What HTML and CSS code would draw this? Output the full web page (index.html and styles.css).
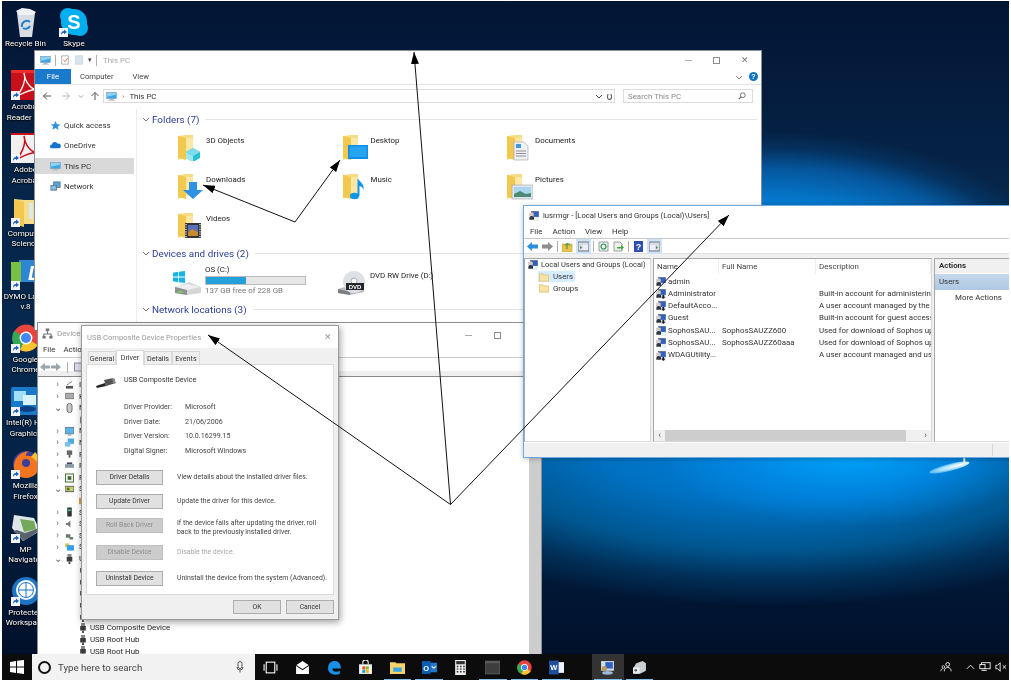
FILE: index.html
```html
<!DOCTYPE html>
<html lang="en">
<head>
<meta charset="utf-8">
<title>Windows desktop</title>
<link rel="stylesheet" href="styles.css">
</head>
<body>
<svg class="defs" width="0" height="0" aria-hidden="true">
  <defs>
    <symbol id="pc" viewBox="0 0 16 14"><rect x="1" y="1" width="14" height="9" fill="#39a6e8" stroke="#7f98ac" stroke-width=".8"/><path d="M1.500 1.500h13v3l-13 3z" fill="#8fd0f5"/><rect x="5" y="10.500" width="6" height="1.500" fill="#a8b4bc"/><rect x="3" y="12" width="10" height="1.400" fill="#c5ccd2"/></symbol>
    <symbol id="folder" viewBox="0 0 28 28"><path d="M2 3l8-1h7v22l-7 0-8 3z" fill="#f7dc86"/><path d="M2 3l8 2v22l-8-2z" fill="#f3c84f"/><path d="M10 5h7v19h-7z" fill="#fbe7a6"/></symbol>
    <symbol id="f3d" viewBox="0 0 28 28"><use href="#folder"/><path d="M10 19l7-4 7 4v6l-7 4-7-4z" fill="#27bfd6"/><path d="M10 19l7 4v6l-7-4z" fill="#9fe7ef"/><path d="M10 19l7-4 7 4-7 4z" fill="#7fdceb"/></symbol>
    <symbol id="fdesk" viewBox="0 0 28 28"><use href="#folder"/><rect x="7" y="12" width="20" height="14" fill="#0f8fe8"/><rect x="8.500" y="13.500" width="17" height="10.500" fill="#27a4f0"/></symbol>
    <symbol id="fdoc" viewBox="0 0 28 28"><use href="#folder"/><path d="M9 9h10l4 4v14H9z" fill="#eef0f2" stroke="#9aa3ab" stroke-width=".6"/><rect x="11" y="11" width="5" height="4" fill="#3b9ae0"/><path d="M11 18h10M11 20.500h10M11 23h10" stroke="#778" stroke-width=".8"/></symbol>
    <symbol id="fdown" viewBox="0 0 28 28"><use href="#folder"/><path d="M14 14h8v8h6l-10 9-10-9h6z" fill="#2d92e3" transform="translate(-1 -4)"/></symbol>
    <symbol id="fmusic" viewBox="0 0 28 28"><use href="#folder"/><ellipse cx="13.500" cy="24" rx="4.500" ry="3.200" fill="#1295e6"/><path d="M16.500 24V6c2 4 7 5 6 12-1-3-3-4-4-4v10z" fill="#1295e6"/></symbol>
    <symbol id="fpic" viewBox="0 0 28 28"><use href="#folder"/><rect x="7" y="13" width="21" height="14" fill="#dfe5ea" stroke="#9aa3ab" stroke-width=".6"/><rect x="9" y="15" width="17" height="10" fill="#a9d6ef"/><path d="M9 22l6-3 6 3 5-1v4H9z" fill="#4e8a73"/></symbol>
    <symbol id="fvid" viewBox="0 0 28 28"><use href="#folder"/><rect x="9" y="12" width="16" height="15" fill="#33343a"/><rect x="12" y="14" width="10" height="11" fill="#5a70b8"/><path d="M12 21l4-3 6 3v4H12z" fill="#c8892f"/><path d="M10 13v14M24 13v14" stroke="#ddd" stroke-width="1.400" stroke-dasharray="1.200 1.200"/></symbol>
    <symbol id="hdd" viewBox="0 0 28 24"><path d="M2 16l14-5 12 5v6l-14 2-12-2z" fill="#d4d6d8"/><path d="M2 16l12 3 14-3-14-3z" fill="#eceef0"/><path d="M2 16l12 3v5l-12-2z" fill="#8d9094"/><rect x="5" y="20" width="5" height="1.600" fill="#7ad84a"/></symbol>
    <symbol id="dvd" viewBox="0 0 28 24"><path d="M1 18l13-4 13 4v3l-14 3-12-2z" fill="#b9bcc0"/><path d="M1 18l12 3v3l-12-2z" fill="#7a7d82"/><circle cx="17" cy="11" r="11" fill="#dde0e4"/><circle cx="17" cy="10" r="3" fill="#fff" stroke="#a9adb2"/><rect x="9" y="12" width="18" height="7" fill="#23242a"/></symbol>
    <symbol id="win" viewBox="0 0 14 14"><path d="M0 2l6-1v5.500H0zM7 .8l7-.8v6.500H7zM0 7.500h6V13l-6-1zM7 7.500h7V14l-7-1z"/></symbol>
    <symbol id="user" viewBox="0 0 11 11"><rect x="3" y="0.500" width="7.500" height="6.500" fill="#2f62c0" stroke="#39405a" stroke-width=".5"/><rect x="0" y="2" width="5" height="6" fill="#cbd5e8"/><circle cx="3" cy="3.500" r="1.900" fill="#e5c9a8"/><path d="M.3 9.500c0-3 1-4 2.700-4s3 1 3 4z" fill="#2e3440"/><rect x="5.500" y="6.500" width="5.500" height="4.500" fill="#e9eef6"/></symbol>
    <symbol id="userd" viewBox="0 0 11 11"><use href="#user"/><path d="M7 6.500h2v2h1.400L8 10.900 5.600 8.500H7z" fill="#222"/></symbol>
    <symbol id="short" viewBox="0 0 9 9"><rect width="9" height="9" fill="#f2f4f8"/><path d="M2 7c0-3 1-4 3-4V1.500L8 4 5 6.300V4.800C3.500 4.800 3 5.500 2 7z" fill="#1c5fc0"/></symbol>
    <symbol id="chromei" viewBox="0 0 24 24"><circle cx="12" cy="12" r="11.500" fill="#e8453c"/><path d="M12 12L22 18A11.500 11.500 0 0 1 6.500 22z" fill="#f8c42c"/><path d="M12 12L6.500 22.500A11.500 11.500 0 0 1 2 6z" fill="#35a853"/><circle cx="12" cy="12" r="5.500" fill="#fff"/><circle cx="12" cy="12" r="4.300" fill="#4387f3"/></symbol>
    <symbol id="usb" viewBox="0 0 8 10"><rect x="2" y="0" width="4" height="3" fill="#888"/><rect x="1.200" y="3" width="5.600" height="4.500" fill="#3a3a3a"/><rect x="3" y="7.500" width="2" height="2.500" fill="#555"/></symbol>
    <symbol id="fsmall" viewBox="0 0 12 11"><path d="M.5 1.500h4l1 1.500h6v7.500H.5z" fill="#f8e3a0" stroke="#c8a850" stroke-width=".6"/></symbol>
  </defs>
</svg>

<div class="desktop">
  <main class="screen">
    <ul class="dicons">
      <li class="dicon"><svg class="dimg" viewBox="0 0 30 30"><path d="M6 6h18l-3 24H9z" fill="#d7dde2"/><path d="M5 4l6-3 8 1 6 3-3 3H8z" fill="#eff2f4"/><path d="M11 20a5 5 0 0 1 8-5M19 19a5 5 0 0 1-7 2" fill="none" stroke="#2481cf" stroke-width="2"/></svg><span class="dlabel">Recycle Bin</span></li>
      <li class="dicon"><svg class="dimg" viewBox="0 0 30 30"><circle cx="9" cy="9" r="8" fill="#00aff0"/><circle cx="21" cy="21" r="8" fill="#00aff0"/><circle cx="15" cy="15" r="13" fill="#00aff0"/><text x="15" y="22" class="skype-s">S</text><use href="#short" x="0" y="21" width="9" height="9"/></svg><span class="dlabel">Skype</span></li>
      <li class="dicon"><svg class="dimg" viewBox="0 0 30 30"><rect width="30" height="30" fill="#c8101a"/><rect width="30" height="3" fill="#ee2a2a"/><path d="M13 3c3 8-4 21-9 24 4-1 14-9 23-7-6 0-13-7-14-17z" fill="none" stroke="#fff" stroke-width="1.300"/><use href="#short" x="0" y="21" width="9" height="9"/></svg><span class="dlabel">Acrobat<br>Reader DC</span></li>
      <li class="dicon"><svg class="dimg" viewBox="0 0 30 30"><rect width="30" height="30" fill="#f0f0f0"/><rect width="30" height="2" fill="#c8101a"/><path d="M13 3c3 8-4 21-9 24 4-1 14-9 23-7-6 0-13-7-14-17z" fill="none" stroke="#c8101a" stroke-width="1.500"/><use href="#short" x="0" y="21" width="9" height="9"/></svg><span class="dlabel">Adobe<br>Acrobat</span></li>
      <li class="dicon"><svg class="dimg" viewBox="0 0 30 30"><path d="M3 2l10 1h14v24H3z" fill="#f6dc8a"/><path d="M3 2l10 3v25L3 27z" fill="#f2c94e"/><rect x="18" y="6" width="4" height="16" fill="#dce8f0"/><use href="#short" x="0" y="21" width="9" height="9"/></svg><span class="dlabel">Computer<br>Science</span></li>
      <li class="dicon"><svg class="dimg" viewBox="0 0 30 30"><rect x="8" y="0" width="22" height="22" fill="#2d86cf"/><rect x="0" y="2" width="10" height="20" fill="#77c043"/><text x="17" y="20" class="dymo-d">D</text><use href="#short" x="0" y="21" width="9" height="9"/></svg><span class="dlabel">DYMO Label<br>v.8</span></li>
      <li class="dicon"><svg class="dimg" viewBox="0 0 30 30"><use href="#chromei" x="1" y="1" width="28" height="28"/><use href="#short" x="0" y="21" width="9" height="9"/></svg><span class="dlabel">Google<br>Chrome</span></li>
      <li class="dicon"><svg class="dimg" viewBox="0 0 30 30"><rect x="0" y="1" width="30" height="28" rx="2" fill="#1a78c8"/><rect x="3" y="5" width="12" height="10" fill="#9fe0f7"/><rect x="12" y="9" width="13" height="10" fill="#d8f3fb"/><ellipse cx="16" cy="23" rx="9" ry="3" fill="#0e3f86"/><use href="#short" x="0" y="21" width="9" height="9"/></svg><span class="dlabel">Intel(R) HD<br>Graphics</span></li>
      <li class="dicon"><svg class="dimg" viewBox="0 0 30 30"><circle cx="15" cy="15" r="13" fill="#3a3f9c"/><path d="M3 20C2 10 8 3 18 2c-3 2-3 4-3 5 6-1 13 3 13 10 0 7-6 12-13 12S4 25 3 20z" fill="#f4741f"/><path d="M24 3c4 4 5 10 4 14-2-5-4-7-8-9z" fill="#fdc42c"/><circle cx="15" cy="14" r="4" fill="#3a3f9c"/><use href="#short" x="0" y="21" width="9" height="9"/></svg><span class="dlabel">Mozilla<br>Firefox</span></li>
      <li class="dicon"><svg class="dimg" viewBox="0 0 30 30"><path d="M3 2l20 3 6 13-17 10L1 15z" fill="#dfe6ea"/><path d="M9 6l14 2 2 8-12 3z" fill="#72a95a"/><path d="M6 17l8 3 14-5v3L13 28 2 18z" fill="#59636c"/><use href="#short" x="0" y="21" width="9" height="9"/></svg><span class="dlabel">MP<br>Navigator</span></li>
      <li class="dicon"><svg class="dimg" viewBox="0 0 30 30"><circle cx="15" cy="15" r="14" fill="#1d74c2"/><circle cx="15" cy="14" r="10" fill="#fff"/><circle cx="15" cy="14" r="7.500" fill="none" stroke="#1d74c2"/><path d="M15 6.500v15M7.500 14h15" stroke="#1d74c2"/><use href="#short" x="0" y="21" width="9" height="9"/></svg><span class="dlabel">Protected<br>Workspace</span></li>
    </ul>
    <div class="flare"></div>

    <section class="win explorer">
      <div class="ex-title">
        <svg class="i11"><use href="#pc"/></svg><i class="tsep"></i>
        <svg class="i10" viewBox="0 0 10 12"><path d="M1 1h8v10H1z" fill="#fff" stroke="#9aa"/><path d="M3 6l2 2 3-4" fill="none" stroke="#d8622a" stroke-width="1.100"/></svg>
        <svg class="i10" viewBox="0 0 10 12"><rect x="1" y="1" width="8" height="10" fill="#d8e6f4" stroke="#c8d4e0"/></svg>
        <span class="qdrop">▾</span><i class="tsep"></i><span class="ex-name">This PC</span>
        <div class="controls"><span class="c-min"></span><span class="c-max"></span><span class="c-x">✕</span></div>
      </div>
      <div class="ex-tabs">
        <span class="tab-file">File</span><span class="tab">Computer</span><span class="tab">View</span>
        <span class="ribbon-end"><svg class="i8" viewBox="0 0 8 8"><path d="M1 3l3 3 3-3" fill="none" stroke="#888"/></svg><b class="help">?</b></span>
      </div>
      <div class="ex-addr">
        <svg class="navi" viewBox="0 0 10 10"><path d="M9 5H1.500M5 1.500L1.500 5 5 8.500" fill="none" stroke="#555"/></svg>
        <svg class="navi dim" viewBox="0 0 10 10"><path d="M1 5h7.500M5 1.500L8.500 5 5 8.500" fill="none" stroke="#bbb"/></svg>
        <svg class="navi small" viewBox="0 0 8 8"><path d="M1 3l3 3 3-3" fill="none" stroke="#888"/></svg>
        <svg class="navi up" viewBox="0 0 10 10"><path d="M5 9V1.500M1.500 5L5 1.500 8.500 5" fill="none" stroke="#555"/></svg>
        <div class="crumb"><svg class="i11"><use href="#pc"/></svg><span class="crumb-sep">›</span><span>This PC</span>
          <span class="crumb-end"><svg class="i8" viewBox="0 0 8 8"><path d="M1 3l3 3 3-3" fill="none" stroke="#444"/></svg><i class="refresh"></i></span></div>
        <div class="search"><span>Search This PC</span><svg class="i8" viewBox="0 0 10 10"><circle cx="6" cy="4" r="3" fill="none" stroke="#555"/><path d="M4 6L1 9" stroke="#555" stroke-width="1.300"/></svg></div>
      </div>
      <div class="ex-body">
        <nav class="ex-nav">
          <div class="nav-row"><svg class="i11" viewBox="0 0 12 12"><path d="M6 1l1.500 3.500 3.800.3-2.900 2.500.9 3.700L6 8.600 2.700 10.500l.9-3.700L.7 4.800l3.800-.3z" fill="#2f8fe0"/></svg><span>Quick access</span></div>
          <div class="nav-row"><svg class="i11" viewBox="0 0 12 12"><path d="M2 9a2 2 0 0 1 0-4 3.500 3.500 0 0 1 6.500-1A2.500 2.500 0 0 1 10 9z" fill="#1474cc"/></svg><span>OneDrive</span></div>
          <div class="nav-row on"><svg class="i11"><use href="#pc"/></svg><span>This PC</span></div>
          <div class="nav-row"><svg class="i11" viewBox="0 0 12 12"><rect x="4" y="1" width="7" height="6" fill="#4da8e4" stroke="#678"/><rect x="1" y="5" width="6" height="5" fill="#7cc0ec" stroke="#678"/></svg><span>Network</span></div>
        </nav>
        <div class="ex-main">
          <h2 class="sec"><svg class="i8" viewBox="0 0 8 8"><path d="M1 3l3 3 3-3" fill="none" stroke="#777"/></svg><span>Folders (7)</span><i></i></h2>
          <div class="folders">
            <div class="fitem"><svg class="i28"><use href="#f3d"/></svg><span>3D Objects</span></div>
            <div class="fitem"><svg class="i28"><use href="#fdesk"/></svg><span>Desktop</span></div>
            <div class="fitem"><svg class="i28"><use href="#fdoc"/></svg><span>Documents</span></div>
            <div class="fitem"><svg class="i28"><use href="#fdown"/></svg><span>Downloads</span></div>
            <div class="fitem"><svg class="i28"><use href="#fmusic"/></svg><span>Music</span></div>
            <div class="fitem"><svg class="i28"><use href="#fpic"/></svg><span>Pictures</span></div>
            <div class="fitem"><svg class="i28"><use href="#fvid"/></svg><span>Videos</span></div>
          </div>
          <h2 class="sec sec-dev"><svg class="i8" viewBox="0 0 8 8"><path d="M1 3l3 3 3-3" fill="none" stroke="#777"/></svg><span>Devices and drives (2)</span><i></i></h2>
          <div class="drives">
            <div class="drive">
              <svg class="hd-ic" viewBox="0 0 28 24"><use href="#hdd"/><use href="#win" x="0" y="0" width="12" height="12" fill="#16b3e8"/></svg>
              <div class="drive-info"><span>OS (C:)</span><div class="meter"><div class="meter-fill"></div></div><span class="free">137 GB free of 228 GB</span></div>
            </div>
            <div class="drive dvd"><svg class="hd-ic" viewBox="0 0 28 24"><use href="#dvd"/><text x="18" y="18" class="dvd-t">DVD</text></svg><span>DVD RW Drive (D:)</span></div>
          </div>
          <h2 class="sec sec-net"><svg class="i8" viewBox="0 0 8 8"><path d="M1 3l3 3 3-3" fill="none" stroke="#777"/></svg><span>Network locations (3)</span><i></i></h2>
        </div>
      </div>
    </section>

    <section class="win devmgr">
      <div class="dm-title"><svg class="i11" viewBox="0 0 12 12"><rect x="4" y="0.500" width="4" height="3" fill="#777"/><path d="M6 3.500v3M2 9V6.500h8V9" fill="none" stroke="#666"/><rect x="0.500" y="8.500" width="3.500" height="3" fill="#777"/><rect x="8" y="8.500" width="3.500" height="3" fill="#777"/></svg><span>Device Manager</span>
        <div class="dm-controls"><span class="c-min"></span><span class="c-max"></span></div>
      </div>
      <div class="dm-menu"><span>File</span><span>Action</span><span>View</span><span>Help</span></div>
      <div class="dm-tools"><svg class="i10" viewBox="0 0 10 10"><path d="M0 5l5-4v2.500h5v3H5V9z" fill="#9aa4ac"/></svg><svg class="i10" viewBox="0 0 10 10"><path d="M10 5L5 1v2.500H0v3h5V9z" fill="#9aa4ac"/></svg><i class="tsep"></i><svg class="i10" viewBox="0 0 10 10"><rect x=".5" y="1" width="9" height="8" fill="#dde" stroke="#889"/></svg></div>
      <div class="dm-body">
        <ul class="tree">
          <li class="r"><b>›</b><svg class="i9" viewBox="0 0 10 10"><rect x="1" y="6" width="8" height="3" fill="#555"/><path d="M2 5l6-4" stroke="#777"/></svg><span>IDE ATA/ATAPI controllers</span></li>
          <li class="r"><b>›</b><svg class="i9" viewBox="0 0 10 10"><rect y="2" width="10" height="6" fill="#a8acb0" stroke="#777"/></svg><span>Keyboards</span></li>
          <li class="r"><b class="dn">⌄</b><svg class="i9" viewBox="0 0 10 12"><rect x="2" y="0.500" width="6" height="11" rx="3" fill="#c8ced4" stroke="#555"/></svg><span>Mice and other pointing devices</span></li>
          <li class="r child"><svg class="i9" viewBox="0 0 10 12"><rect x="2" y="0.500" width="6" height="11" rx="3" fill="#c8ced4" stroke="#555"/></svg><span>HID-compliant mouse</span></li>
          <li class="r"><b>›</b><svg class="i9" viewBox="0 0 10 10"><rect y="1" width="10" height="7" fill="#5cb4ea" stroke="#678"/><path d="M3 9.500h4" stroke="#678"/></svg><span>Monitors</span></li>
          <li class="r"><b>›</b><svg class="i9" viewBox="0 0 10 10"><rect x="3" y="0" width="7" height="6" fill="#4da8e4"/><rect y="4" width="6" height="5" fill="#7cc0ec"/></svg><span>Network adapters</span></li>
          <li class="r"><b>›</b><svg class="i9" viewBox="0 0 10 10"><rect x="2" y="1" width="6" height="5" fill="#666"/><path d="M4 6h2v3H4z" fill="#555"/></svg><span>Portable Devices</span></li>
          <li class="r"><b>›</b><svg class="i9" viewBox="0 0 10 10"><rect y="3" width="10" height="4" fill="#8899a8"/><rect x="2" y="1" width="6" height="2" fill="#446"/></svg><span>Print queues</span></li>
          <li class="r"><b>›</b><svg class="i9" viewBox="0 0 10 10"><rect x=".5" y=".5" width="9" height="9" fill="#eee" stroke="#3d6a2c"/><rect x="3" y="3" width="4" height="4" fill="#3d6a2c"/></svg><span>Processors</span></li>
          <li class="r"><b class="dn">⌄</b><svg class="i9" viewBox="0 0 10 10"><rect y="2" width="10" height="6" fill="#c9cc6a" stroke="#556"/><rect x="2" y="3.500" width="3" height="3" fill="#4a7a3a"/></svg><span>Security devices</span></li>
          <li class="r child"><svg class="i9" viewBox="0 0 10 10"><rect y="1" width="10" height="8" fill="#d9a63c"/></svg><span>Trusted Platform Module</span></li>
          <li class="r"><b>›</b><svg class="i9" viewBox="0 0 10 10"><rect x="2.500" y="0" width="5" height="10" fill="#333"/><rect x="3.500" y="2" width="3" height="2" fill="#4c9"/></svg><span>Software devices</span></li>
          <li class="r"><b>›</b><svg class="i9" viewBox="0 0 10 10"><path d="M1 4h2l3-3v8L3 6H1z" fill="#777"/></svg><span>Sound, video and game controllers</span></li>
          <li class="r"><b>›</b><svg class="i9" viewBox="0 0 10 10"><path d="M1 3h5v4H1zM5 6h4v3H5z" fill="#667a6a"/></svg><span>Storage controllers</span></li>
          <li class="r"><b>›</b><svg class="i9" viewBox="0 0 10 10"><rect y="1" width="5" height="4" fill="#e6c25a"/><rect x="2" y="3" width="8" height="6" fill="#35a0e6"/></svg><span>System devices</span></li>
          <li class="r"><b class="dn">⌄</b><svg class="i9"><use href="#usb"/></svg><span>Universal Serial Bus controllers</span></li>
          <li class="r child"><svg class="i9"><use href="#usb"/></svg><span>Intel(R) USB 3.0 eXtensible Host Controller</span></li>
          <li class="r child"><svg class="i9"><use href="#usb"/></svg><span>Generic USB Hub</span></li>
          <li class="r child"><svg class="i9"><use href="#usb"/></svg><span>Generic USB Hub</span></li>
          <li class="r child"><svg class="i9"><use href="#usb"/></svg><span>Standard Enhanced PCI to USB Host Controller</span></li>
          <li class="r child"><svg class="i9"><use href="#usb"/></svg><span>Standard Enhanced PCI to USB Host Controller</span></li>
          <li class="r child"><svg class="i9"><use href="#usb"/></svg><span>USB Composite Device</span></li>
          <li class="r child"><svg class="i9"><use href="#usb"/></svg><span>USB Root Hub</span></li>
          <li class="r child"><svg class="i9"><use href="#usb"/></svg><span>USB Root Hub</span></li>
        </ul>
        <div class="dm-scroll"></div>
      </div>
    </section>

    <section class="win dialog">
      <div class="dlg-title"><span>USB Composite Device Properties</span><span class="dlg-x">✕</span></div>
      <div class="dlg-tabs"><span>General</span><span class="sel">Driver</span><span>Details</span><span>Events</span></div>
      <div class="dlg-panel">
        <div class="dlg-head"><svg class="usbplug" viewBox="0 0 20 10"><path d="M0 8l9-3 1 3-9 2z" fill="#222"/><path d="M8 2l9-2 3 5-10 3z" fill="#555"/><path d="M16 0l3 1v4l-2 0z" fill="#888"/></svg><span>USB Composite Device</span></div>
        <dl class="info">
          <dt>Driver Provider:</dt><dd>Microsoft</dd>
          <dt>Driver Date:</dt><dd>21/06/2006</dd>
          <dt>Driver Version:</dt><dd>10.0.16299.15</dd>
          <dt>Digital Signer:</dt><dd>Microsoft Windows</dd>
        </dl>
        <div class="acts">
          <div class="act"><button class="btn" type="button">Driver Details</button><p>View details about the installed driver files.</p></div>
          <div class="act"><button class="btn" type="button">Update Driver</button><p>Update the driver for this device.</p></div>
          <div class="act off"><button class="btn" type="button" disabled>Roll Back Driver</button><p class="two">If the device fails after updating the driver, roll<br>back to the previously installed driver.</p></div>
          <div class="act off"><button class="btn" type="button" disabled>Disable Device</button><p>Disable the device.</p></div>
          <div class="act"><button class="btn" type="button">Uninstall Device</button><p>Uninstall the device from the system (Advanced).</p></div>
        </div>
      </div>
      <div class="dlg-foot"><button class="btn" type="button">OK</button><button class="btn" type="button">Cancel</button></div>
    </section>

    <section class="win lusr">
      <div class="lu-title"><svg class="i10"><use href="#user"/></svg><span>lusrmgr - [Local Users and Groups (Local)\Users]</span></div>
      <div class="lu-menu"><span>File</span><span>Action</span><span>View</span><span>Help</span></div>
      <div class="lu-tools">
        <svg class="tb" viewBox="0 0 11 11"><path d="M0 5.500l5-4.500v2.500h6v4H5V10z" fill="#2a8fe0"/></svg>
        <svg class="tb" viewBox="0 0 11 11"><path d="M11 5.500L6 1v2.500H0v4h6V10z" fill="#8d8d8d"/></svg>
        <i class="tsep"></i>
        <svg class="tb" viewBox="0 0 11 11"><path d="M0 3h10v8H0z" fill="#e8c34e" stroke="#a88a30" stroke-width=".5"/><path d="M5 8V3M3 4.500L5.500 2 8 4.500" stroke="#2a8a30" fill="none"/></svg>
        <span class="tb-on"><svg class="tb" viewBox="0 0 11 11"><rect y="1" width="11" height="9" fill="#d8dee4" stroke="#778"/><rect x="5" y="4" width="5" height="5" fill="#eef"/><path d="M2 5l2 1.500L2 8z" fill="#3a8a3a"/></svg></span>
        <i class="tsep"></i>
        <svg class="tb" viewBox="0 0 11 11"><path d="M1 1h9v9H1z" fill="#eef1f4" stroke="#99a"/><circle cx="5.500" cy="5.500" r="2.500" fill="none" stroke="#2a9a40" stroke-width="1.200"/></svg>
        <svg class="tb" viewBox="0 0 11 11"><path d="M1 1h6l2 2v7H1z" fill="#f1f2e6" stroke="#99a"/><path d="M4 6h4V4l3 2.500L8 9V7.500H4z" fill="#3caa3c"/></svg>
        <i class="tsep"></i>
        <svg class="tb" viewBox="0 0 11 11"><rect x="1" y="0" width="9" height="11" fill="#2f4fb0"/><text x="5.500" y="9" class="qmark">?</text></svg>
        <span class="tb-on"><svg class="tb" viewBox="0 0 11 11"><rect y="1" width="11" height="9" fill="#d8dee4" stroke="#778"/><rect x="1" y="4" width="5" height="5" fill="#eef"/><path d="M7 5l2 1.500L7 8z" fill="#3a8a3a"/></svg></span>
      </div>
      <div class="lu-panes">
        <div class="pane p-tree">
          <div class="lt-root"><svg class="i10"><use href="#user"/></svg><span>Local Users and Groups (Local)</span></div>
          <div class="lt-child sel"><svg class="i10"><use href="#fsmall"/></svg><span>Users</span></div>
          <div class="lt-child"><svg class="i10"><use href="#fsmall"/></svg><span>Groups</span></div>
        </div>
        <div class="pane p-list">
          <div class="l-head"><span>Name</span><span>Full Name</span><span>Description</span></div>
          <div class="l-rows">
            <div class="l-row"><span><svg class="i10"><use href="#user"/></svg>admin</span><span></span><span></span></div>
            <div class="l-row"><span><svg class="i10"><use href="#userd"/></svg>Administrator</span><span></span><span>Built-in account for administering the computer</span></div>
            <div class="l-row"><span><svg class="i10"><use href="#userd"/></svg>DefaultAcco...</span><span></span><span>A user account managed by the system</span></div>
            <div class="l-row"><span><svg class="i10"><use href="#userd"/></svg>Guest</span><span></span><span>Built-in account for guest access to the computer</span></div>
            <div class="l-row"><span><svg class="i10"><use href="#user"/></svg>SophosSAU...</span><span>SophosSAUZZ600</span><span>Used for download of Sophos updates</span></div>
            <div class="l-row"><span><svg class="i10"><use href="#user"/></svg>SophosSAU...</span><span>SophosSAUZZ60aaa</span><span>Used for download of Sophos updates</span></div>
            <div class="l-row"><span><svg class="i10"><use href="#userd"/></svg>WDAGUtility...</span><span></span><span>A user account managed and used by the system</span></div>
          </div>
          <div class="hscroll"><b>‹</b><i></i><b>›</b></div>
        </div>
        <div class="pane p-act">
          <div class="a-head">Actions</div>
          <div class="a-sel">Users</div>
          <div class="a-more">More Actions</div>
        </div>
      </div>
      <div class="lu-status"><i></i></div>
    </section>
  </main>

  <footer class="taskbar">
    <span class="start"><svg class="i12" fill="#fff"><use href="#win"/></svg></span>
    <div class="searchbox"><i class="cortana"></i><span>Type here to search</span><svg class="mic" viewBox="0 0 8 12"><rect x="2" y="0.500" width="4" height="7" rx="2" fill="none" stroke="#555"/><path d="M1 6a3 3 0 0 0 6 0M4 9v2.500" fill="none" stroke="#555"/></svg></div>
    <div class="apps">
      <span class="app"><svg class="ai" viewBox="0 0 14 14"><rect x="3" y="2" width="8" height="10" fill="none" stroke="#fff"/><path d="M1 4v6M13 4v6" stroke="#fff"/></svg></span>
      <span class="app"><svg class="ai" viewBox="0 0 14 14"><path d="M1 5l6-4 6 4v8H1z" fill="#fff"/><path d="M1 5l6 4 6-4" fill="none" stroke="#111"/></svg></span>
      <span class="app"><svg class="ai" viewBox="0 0 14 14"><path d="M1 8C1 3 4 1 7 1c4 0 6 3 6 7H5c0 3 4 4 7 2v3c-5 2-11 0-11-5z" fill="#1a8fe6"/></svg></span>
      <span class="app"><svg class="ai" viewBox="0 0 14 14"><path d="M1 4h12v9H1z" fill="#f4f4f4"/><path d="M4.500 4V2a2.500 2 0 0 1 5 0v2" fill="none" stroke="#f4f4f4"/><rect x="4" y="6" width="2.800" height="2.800" fill="#e8502a"/><rect x="7.300" y="6" width="2.800" height="2.800" fill="#7fb90a"/><rect x="4" y="9.200" width="2.800" height="2.800" fill="#1aa0e8"/><rect x="7.300" y="9.200" width="2.800" height="2.800" fill="#f8b810"/></svg></span>
      <span class="app running"><svg class="ai" viewBox="0 0 14 14"><path d="M0 2h5l1 1h8v10H0z" fill="#f6d268"/><rect x="3" y="7" width="8" height="4" fill="#3aa6e6"/></svg></span>
      <span class="app running"><svg class="ai" viewBox="0 0 14 14"><rect x="6" y="2.500" width="8" height="9" fill="#1f78c8"/><rect y="1" width="8" height="12" fill="#0a5db0"/><text x="4" y="10" class="tk-t">O</text><path d="M9 6l2 1.500L13 6" stroke="#fff" fill="none"/></svg></span>
      <span class="app"><svg class="ai" viewBox="0 0 14 14"><rect x="2" width="10" height="14" fill="#eee"/><rect x="3" y="1" width="8" height="3" fill="#333"/><path d="M3.500 6h1.500M6.500 6h1.500M9.500 6h1.500M3.500 8.500h1.500M6.500 8.500h1.500M9.500 8.500h1.500M3.500 11h1.500M6.500 11h1.500M9.500 11h1.500" stroke="#333" stroke-width="1.300"/></svg></span>
      <span class="app running"><svg class="ai" viewBox="0 0 14 14"><rect y="1" width="14" height="12" fill="#3d3d3d" stroke="#6d6d6d" stroke-width=".6"/><rect y="1" width="14" height="2" fill="#5a5a5a"/></svg></span>
      <span class="app running"><svg class="ai" viewBox="0 0 24 24"><use href="#chromei"/></svg></span>
      <span class="app running"><svg class="ai" viewBox="0 0 14 14"><rect x="6" y="2" width="8" height="10" fill="#eef3fa"/><rect y="0.500" width="9" height="13" fill="#1f4f9c"/><text x="4.500" y="9.500" class="tk-t">W</text></svg></span>
      <span class="app running active"><svg class="ai" viewBox="0 0 14 14"><rect x="1" y="1" width="12" height="9" fill="#d5dce6"/><rect x="5" y="2" width="7" height="6" fill="#2f62c0"/><circle cx="4" cy="8" r="2.500" fill="#b89a5a"/><ellipse cx="7" cy="12" rx="5" ry="1.800" fill="#9ab8d8"/></svg></span>
      <span class="app running"><svg class="ai" viewBox="0 0 14 14"><path d="M4 3l6-2 3 2v7L7 13H1V8z" fill="#c9cfd4"/><rect x="1" y="7" width="6" height="5" fill="#eef0f2"/><circle cx="3.500" cy="9.500" r="1.200" fill="#555"/></svg></span>
    </div>
    <div class="tray">
      <svg class="ti t-people" viewBox="0 0 14 12"><circle cx="9" cy="3" r="2.200" fill="none" stroke="#fff"/><path d="M5 11c0-3 2-4.500 4-4.500s4 1.500 4 4.500" fill="none" stroke="#fff"/><circle cx="4" cy="6" r="1.600" fill="none" stroke="#ddd"/><path d="M1 11c0-2 1-3 2.500-3" fill="none" stroke="#ddd"/></svg>
      <svg class="ti t-chev" viewBox="0 0 10 8"><path d="M1 6l4-4 4 4" fill="none" stroke="#fff"/></svg>
      <svg class="ti" viewBox="0 0 14 12"><rect x="3" y="1" width="10" height="7" fill="none" stroke="#fff"/><rect x="1" y="3" width="6" height="5" fill="#0a0a0a" stroke="#fff"/><path d="M3 10h6" stroke="#fff"/></svg>
      <svg class="ti" viewBox="0 0 14 12"><path d="M1 4h2l3-3v10L3 8H1z" fill="none" stroke="#fff"/><path d="M9 4l4 4M13 4l-4 4" stroke="#fff"/></svg>
    </div>
  </footer>
</div>

<svg class="arrows" viewBox="0 0 1011 682" aria-hidden="true">
  <defs><marker id="ah" viewBox="0 0 12 8" refX="12" refY="4" markerWidth="12" markerHeight="8" markerUnits="userSpaceOnUse" orient="auto"><path d="M0 0L12 4 0 8z" fill="#000"/></marker></defs>
  <g fill="none" stroke="#111" stroke-width="1">
    <path d="M450.500 504.500L414 52" marker-end="url(#ah)"/>
    <path d="M450.500 504.500L729 215" marker-end="url(#ah)"/>
    <path d="M450.500 504.500L208 335" marker-end="url(#ah)"/>
    <path d="M295 222L203 185" marker-end="url(#ah)"/>
    <path d="M295 222L340 160" marker-end="url(#ah)"/>
  </g>
</svg>
</body>
</html>
```
FILE: styles.css
```css
* { box-sizing: border-box; }
html, body { margin: 0; padding: 0; background: #fff; width: 1011px; height: 682px; overflow: hidden; }
body { position: relative; font-family: Roboto, "Noto Sans", sans-serif; font-size: 7.9px; color: #222; }
.defs { position: absolute; }
ul, dl, p, h2, dd { margin: 0; padding: 0; list-style: none; }
i, b { font-style: normal; font-weight: normal; }
svg { display: block; flex: none; }

.desktop { display: flex; flex-direction: column; width: 1011px; height: 682px; padding: 1px 2px 2px; filter: blur(.4px); }
.screen {
  position: relative; flex: 1; overflow: hidden;
  background:
    radial-gradient(ellipse 190px 75px at 850px 450px, rgba(0,168,255,.9) 0, rgba(0,148,245,.55) 55%, rgba(0,130,225,0) 100%),
    radial-gradient(ellipse 450px 175px at 770px 430px, #0084de 0, #0072c4 40%, #00568f 68%, rgba(0,56,100,.7) 85%, rgba(0,40,80,0) 100%),
    radial-gradient(ellipse 310px 170px at 770px 300px, #0a8cea 0, #0578cc 60%, #05569c 78%, rgba(4,60,115,.55) 90%, rgba(4,40,85,0) 100%),
    linear-gradient(180deg, #031535 0, #062649 30%, #06294f 55%, #031f42 78%, #00102a 100%);
}
.flare { position: absolute; left: 927px; top: 463px; width: 41px; height: 7px; border-radius: 50%; background: radial-gradient(ellipse at 75% 50%, #fff 0, #a9e2ff 45%, rgba(70,180,255,0) 100%); transform: rotate(-14deg); }
.flare::after { content: ""; position: absolute; left: 36px; top: -6px; width: 1.500px; height: 9px; background: #e6f4d0; transform: rotate(14deg); }

.dicons { position: absolute; left: 0; top: 1px; display: grid; grid-template-columns: 47px 50px; grid-auto-rows: 63.2px; }
.dicon { grid-column: 1; display: flex; flex-direction: column; align-items: center; padding-top: 5px; }
.dicon:nth-child(2) { grid-column: 2; grid-row: 1; }
.dimg { width: 30px; height: 30px; }
.dlabel { margin-top: 2px; width: 47px; text-align: center; color: #fff; line-height: 10.4px; font-size: 8px; text-shadow: 0 0 2px #000, 0 1px 1px #000; white-space: nowrap; }
.skype-s { fill: #fff; font: bold 20px "Liberation Sans", sans-serif; text-anchor: middle; }
.dymo-d { fill: #fff; font: italic bold 20px "Liberation Sans", sans-serif; }

.win { position: absolute; background: #fff; }
.i8 { width: 8px; height: 8px; }
.i9 { width: 9px; height: 10px; }
.i10 { width: 10px; height: 10px; }
.i11 { width: 11px; height: 11px; }
.i12 { width: 14px; height: 14px; }
.i28 { width: 28px; height: 28px; }
.tsep { display: block; width: 1px; height: 11px; background: #b0b0b0; flex: none; }

/* Explorer */
.explorer { left: 32px; top: 49px; width: 728px; height: 280px; border: 1px solid #8a8f94; border-bottom: 0; display: flex; flex-direction: column; }
.ex-title { display: flex; align-items: center; height: 18px; padding-left: 5px; gap: 4px; position: relative; color: #a8a8a8; }
.ex-name { margin-left: 2px; }
.qdrop { color: #444; font-size: 7px; }
.controls { margin-left: auto; display: flex; align-items: center; width: 84px; gap: 21px; padding-left: 8px; color: #888; }
.c-min { width: 7px; height: 1px; background: #aaa; }
.c-max { width: 7px; height: 7px; border: 1px solid #8a8a8a; }
.c-x { font-size: 8.5px; color: #777; }
.ex-tabs { display: flex; align-items: stretch; height: 16px; border-bottom: 1px solid #e3e3e3; color: #444; line-height: 16px; }
.tab-file { width: 36px; background: #1979ca; color: #fff; text-align: center; }
.tab { margin-left: 9px; font-size: 7.6px; }
.tab + .tab { margin-left: 19px; }
.ribbon-end { margin-left: auto; display: flex; align-items: center; gap: 6px; padding-right: 3px; }
.help { width: 9px; height: 9px; border-radius: 50%; background: #0f72c8; color: #fff; font: bold 7px/9px "Liberation Sans", sans-serif; text-align: center; }
.ex-addr { display: flex; align-items: center; height: 16px; margin-top: 3px; padding-left: 7px; color: #333; }
.navi { width: 10px; height: 10px; margin-right: 9px; }
.navi.dim { margin-right: 7px; }
.navi.small { width: 6px; height: 6px; margin-right: 6px; }
.navi.up { margin-right: 3px; }
.crumb { display: flex; align-items: center; gap: 5px; width: 512px; height: 14px; border: 1px solid #dcdcdc; padding-left: 2px; }
.crumb-sep { color: #777; }
.crumb-end { margin-left: auto; display: flex; align-items: center; gap: 3px; padding-right: 2px; width: 19px; }
.refresh { width: 7px; height: 7px; border: 1px solid #555; border-radius: 50%; border-top-color: transparent; margin-left: 1px; }
.search { display: flex; align-items: center; justify-content: space-between; width: 130px; height: 14px; margin-left: 8px; padding: 0 6px 0 4px; border: 1px solid #dcdcdc; color: #8a8a8a; }
.ex-body { display: flex; flex: 1; padding-top: 5px; }
.ex-nav { width: 102px; flex: none; padding-top: 8px; border-right: 1px solid #eee; }
.nav-row { display: flex; align-items: center; gap: 3px; height: 16px; padding-left: 15px; margin-bottom: 4.600px; margin-right: 2px; color: #333; }
.nav-row.on { background: #d9d9d9; }
.ex-main { flex: 1; padding-top: 4px; padding-right: 4px; }
.sec { display: flex; align-items: center; height: 12px; padding-left: 5px; font-weight: normal; font-size: 9.9px; color: #2a3c95; gap: 1px; }
.sec span { margin: 0 5px 0 1px; }
.sec i { flex: 1; height: 1px; background: #e4e4e4; }
.folders { display: grid; grid-template-columns: repeat(3, 164.500px); grid-template-rows: 39px 39px 28px; margin: 8px 0 0 39px; }
.fitem { display: flex; gap: 2px; }
.fitem span { margin-top: 3px; line-height: 10px; }
.sec-dev { margin-top: 8px; }
.drives { display: flex; margin: 5px 0 0 36px; height: 34px; }
.drive { display: flex; width: 164px; }
.hd-ic { width: 28px; height: 24px; margin-top: 7px; margin-right: 4px; flex: none; }
.drive-info { display: flex; flex-direction: column; line-height: 10px; width: 101px; padding-top: 1px; }
.meter { height: 9px; background: #e6e6e6; border: 1px solid #bcbcbc; margin: 1px 0; }
.meter-fill { width: 40%; height: 100%; background: #26a0da; }
.free { color: #777; }
.dvd { gap: 1px; }
.dvd > span { margin-top: 7px; line-height: 10px; white-space: nowrap; }
.dvd-t { fill: #fff; font: bold 6px "Liberation Sans", sans-serif; text-anchor: middle; }
.sec-net { margin-top: 5px; }

/* Device manager */
.devmgr { left: 35px; top: 321px; width: 505px; height: 340px; border: 1px solid #8a8f94; display: flex; flex-direction: column; }
.dm-title { display: flex; align-items: center; height: 19px; gap: 4px; padding: 1px 0 0 4px; color: #999; }
.dm-controls { position: absolute; top: 9px; left: 427px; display: flex; align-items: center; gap: 22px; }
.dm-menu { display: flex; gap: 8px; padding-left: 5px; height: 16px; line-height: 16px; color: #333; border-bottom: 1px solid #ccc; }
.dm-tools { display: flex; align-items: center; height: 19px; gap: 1px; padding-left: 2px; background: linear-gradient(#fff 70%, #efefef 70%); border-bottom: 1px solid #888; }
.dm-tools .tsep { margin: 0 5px; }
.dm-body { display: flex; flex: 1; justify-content: space-between; }
.tree { flex: 1; padding-top: 2px; line-height: 11.600px; }
.r { display: flex; align-items: center; height: 11.600px; padding-left: 15px; white-space: nowrap; color: #222; }
.r b { width: 9px; margin-right: 3px; text-align: center; color: #666; font-size: 9px; line-height: 9px; }
.r b.dn { font-size: 10px; line-height: 6px; }
.r .i9 { margin-right: 5px; }
.r.child { padding-left: 41px; }
.r.child .i9 { width: 8px; margin-right: 3px; }
.dm-scroll { width: 12px; background: #cdcdcd; }

/* Properties dialog */
.dialog { left: 79px; top: 324px; width: 258px; height: 295px; border: 1px solid #9a9a9a; background: #f0f0f0; display: flex; flex-direction: column; box-shadow: 1px 2px 7px rgba(0,0,0,.4); padding: 0 4px; }
.dlg-title { display: flex; justify-content: space-between; align-items: center; height: 22px; margin: 0 -4px; padding: 0 6px 0 5px; background: #fff; color: #9a9a9a; font-size: 7.600px; }
.dlg-x { color: #999; font-size: 9px; }
.dlg-tabs { display: flex; height: 16px; padding-left: 2px; align-items: flex-end; }
.dlg-tabs span { height: 13px; line-height: 13px; width: 28px; text-align: center; background: #efefef; border: 1px solid #dadada; border-bottom: 0; color: #333; font-size: 7.2px; }
.dlg-tabs .sel { height: 15px; background: #fff; margin-bottom: -1px; position: relative; z-index: 1; }
.dlg-panel { height: 231px; background: #fff; border: 1px solid #dadada; padding: 10px 0 0 9px; }
.dlg-head { display: flex; align-items: center; height: 10px; gap: 8px; line-height: 10px; font-size: 7.100px; color: #333; }
.usbplug { width: 20px; height: 10px; margin-top: 6px; }
.info { display: grid; grid-template-columns: 61px 1fr; grid-auto-rows: 14.700px; margin: 17px 0 0 28px; line-height: 10px; color: #444; font-size: 7.100px; }
.acts { display: grid; grid-template-rows: 24px 24px 27px 26px 15px; margin-top: 9px; }
.act { display: flex; gap: 14px; align-items: flex-start; color: #444; font-size: 6.900px; line-height: 9px; }
.act p { white-space: nowrap; margin-top: 3px; }
.act p.two { margin-top: 1px; }
.btn { width: 67px; height: 15px; padding: 0; border: 1px solid #adadad; background: #e1e1e1; color: #333; font: 6.800px Roboto, sans-serif; flex: none; }
.act.off .btn { color: #8e8e8e; background: #ccc; border-color: #c0c0c0; }
.act.off p:not(.two) { color: #a8a8a8; }
.dlg-foot { display: flex; justify-content: flex-end; gap: 5px; margin-top: 5px; }
.dlg-foot .btn { width: 48px; height: 14px; }

/* lusrmgr */
.lusr { left: 521px; top: 204px; width: 490px; height: 253px; border: 1px solid #6eaade; background: #f0f0f0; display: flex; flex-direction: column; box-shadow: 0 1px 5px rgba(0,0,0,.25); }
.lu-title { display: flex; align-items: center; gap: 4px; height: 19px; padding-left: 5px; background: #fff; color: #333; font-size: 7.700px; }
.lu-menu { display: flex; gap: 10px; height: 14px; padding-left: 6px; background: #fff; border-bottom: 1px solid #c8c8c8; color: #333; line-height: 13px; }
.lu-tools { display: flex; align-items: center; height: 15px; padding-left: 3px; gap: 4px; background: #fff; border-bottom: 1px solid #e0e0e0; }
.tb { width: 11px; height: 11px; }
.tb-on { display: flex; align-items: center; justify-content: center; width: 15px; height: 15px; background: #cde4f7; margin: 0 -2px 0 -1px; }
.lu-panes { display: flex; gap: 2px; height: 184px; margin-top: 4px; }
.pane { background: #fff; border: 1px solid #a8a8a8; border-right-color: #d8d8d8; border-bottom-color: #d8d8d8; }
.p-tree { width: 127px; padding: 0 0 0 3px; flex: none; font-size: 7.500px; }
.lt-root, .lt-child { display: flex; align-items: center; height: 11.700px; gap: 3px; color: #333; white-space: nowrap; }
.lt-child { margin-left: 10px; width: fit-content; padding: 0 2px 0 1px; gap: 4px; font-size: 7.900px; }
.lt-child.sel { background: #d6ecff; }
.p-list { width: 279px; flex: none; display: flex; flex-direction: column; overflow: hidden; }
.l-head { display: grid; grid-template-columns: 65px 97px 1fr; height: 15px; line-height: 15px; color: #444; }
.l-head span { padding-left: 3px; border-right: 1px solid #eee; }
.l-rows { flex: 1; margin-top: 1.500px; }
.l-row { display: grid; grid-template-columns: 65px 97px 1fr; height: 12.330px; line-height: 12.330px; color: #333; white-space: nowrap; }
.l-row span { overflow: hidden; padding-left: 3px; }
.l-row span:first-child { display: flex; align-items: center; gap: 2px; padding-left: 2px; }
.hscroll { display: flex; align-items: center; height: 11px; background: #f0f0f0; color: #555; font-size: 9px; line-height: 11px; }
.hscroll b { width: 11px; text-align: center; }
.hscroll i { flex: 1; height: 100%; background: #cdcdcd; margin-right: 14px; }
.p-act { flex: 1; }
.a-head { height: 14px; line-height: 14px; padding-left: 4px; background: #f0f0f0; font-weight: bold; color: #333; }
.a-sel { height: 16px; line-height: 16px; margin-top: 1px; padding-left: 4px; background: linear-gradient(#c4d8ec, #aec8e2); color: #333; }
.a-more { padding: 2px 0 0 20px; line-height: 12px; color: #333; }
.lu-status { flex: 1; position: relative; border-top: 1px solid #fff; }
.lu-status i { position: absolute; left: 468px; top: 1px; bottom: 1px; width: 1px; background: #d8d8d8; }

/* Taskbar */
.taskbar { display: flex; align-items: stretch; height: 26px; background: #0c0c0c; }
.start { display: flex; align-items: center; justify-content: center; width: 30px; }
.searchbox { display: flex; align-items: center; width: 223px; background: #f2f2f2; padding-left: 5px; font-size: 9.700px; color: #444; }
.cortana { width: 13px; height: 13px; border: 2px solid #111; border-radius: 50%; margin-right: 7px; margin-left: 1px; flex: none; }
.mic { width: 8px; height: 12px; margin-left: auto; margin-right: 11px; }
.apps { display: flex; }
.app { position: relative; display: flex; align-items: center; justify-content: center; width: 31.700px; }
.app:nth-child(11) { margin-left: 20px; }
.ai { width: 15px; height: 15px; }
.running::after { content: ""; position: absolute; left: 2px; right: 2px; bottom: 0; height: 1.500px; background: #80c0ee; }
.active { background: #333; }
.tk-t { fill: #fff; font: bold 7px "Liberation Sans", sans-serif; text-anchor: middle; }
.qmark { fill: #fff; font: bold 9px "Liberation Sans", sans-serif; text-anchor: middle; }
.tray { margin-left: auto; display: flex; align-items: center; gap: 4px; padding-right: 2px; }
.ti { width: 12px; height: 12px; }
.t-people { margin-right: 10px; }
.t-chev { width: 9px; }

.arrows { position: absolute; left: 0; top: 0; width: 1011px; height: 682px; pointer-events: none; }
```
